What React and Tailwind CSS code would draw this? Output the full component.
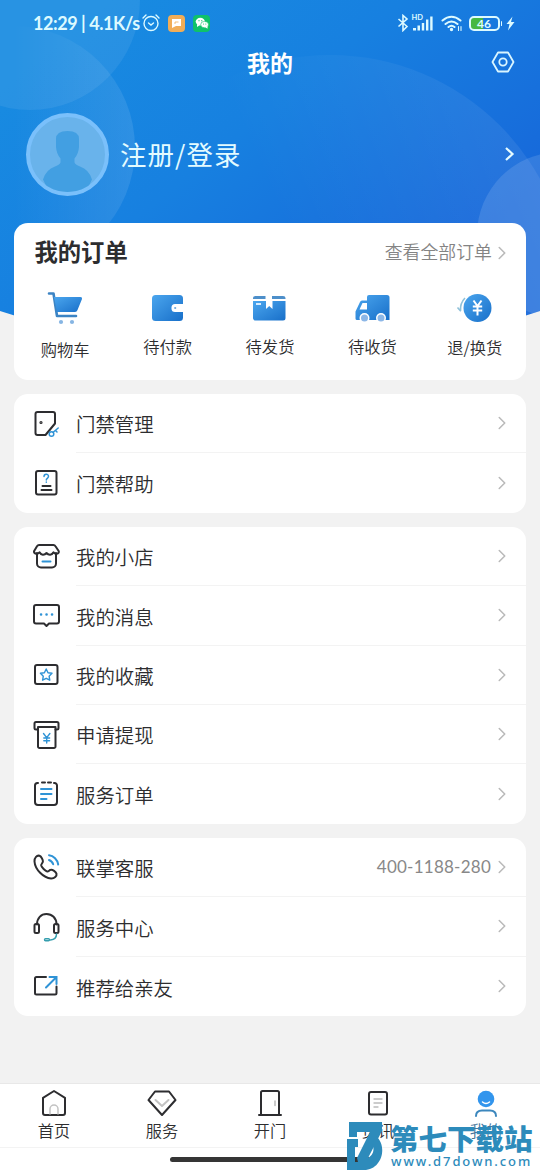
import { ChevronRight } from "lucide-react";

const INK = "#2d2d30";
const BLUE = "#2f93d6";

function Icon({ children, w = 30, h = 30, className = "" }) {
  return (
    <svg
      width={w}
      height={h}
      viewBox={`0 0 ${w} ${h}`}
      fill="none"
      stroke={INK}
      strokeWidth="2"
      strokeLinecap="round"
      strokeLinejoin="round"
      className={`shrink-0 ${className}`}
    >
      {children}
    </svg>
  );
}

const icons = {
  door: (
    <Icon>
      <path d="M14.500 26H6.500a2 2 0 0 1-2-2V5a2 2 0 0 1 2-2H22a2 2 0 0 1 2 2v9.500L14.500 26" />
      <circle cx="10" cy="13.500" r=".6" />
      <g stroke={BLUE} strokeWidth="1.500">
        <circle cx="20.500" cy="25" r="2.300" />
        <path d="M22.200 23.300l5-4.300M24.500 21.500l1.500 1.500" />
      </g>
    </Icon>
  ),
  help: (
    <Icon>
      <rect x="5" y="3" width="20.500" height="23.500" rx="2" />
      <path d="M11.500 18h8M10.500 22h10" />
      <path d="M13 8.500c0-3 4.500-3 4.500-.2 0 2-2.200 2-2.200 3.700M15.300 14v.2" stroke={BLUE} strokeWidth="1.500" />
    </Icon>
  ),
  shop: (
    <Icon>
      <path d="M6 12v10.500a4 4 0 0 0 4 4h11a4 4 0 0 0 4-4V12" />
      <path d="M8 4h14.500c1 0 1.500.5 2 1.300l3.300 5c.3 2.700-3.700 3.500-5.300 1-1.500 3-5 3-7 .7-2 2.300-5.500 2.300-7-.7-1.700 2.500-5.700 1.700-5.500-1L6 5.300C6.500 4.500 7 4 8 4z" />
      <path d="M11.500 20.500h8" stroke={BLUE} />
    </Icon>
  ),
  message: (
    <Icon>
      <path d="M5 4h21a2 2 0 0 1 2 2v14.500a2 2 0 0 1-2 2h-8L15.500 25 13 22.500H5a2 2 0 0 1-2-2V6a2 2 0 0 1 2-2z" />
      <path d="M10 13.500h.1M15.500 13.500h.1M21 13.500h.1" stroke={BLUE} strokeWidth="2.500" />
    </Icon>
  ),
  favorite: (
    <Icon>
      <rect x="4" y="5" width="22.500" height="19" rx="2" />
      <path d="M15.200 9l1.800 3.700 4 .6-2.900 2.900.7 4-3.600-1.900-3.600 1.900.7-4-2.900-2.900 4-.6z" stroke={BLUE} strokeWidth="1.400" />
    </Icon>
  ),
  withdraw: (
    <Icon>
      <path d="M6.500 9.500H5a1.500 1.500 0 0 1-1.500-1.500V3.500A1.500 1.500 0 0 1 5 2h21a1.500 1.500 0 0 1 1.500 1.500V8A1.500 1.500 0 0 1 26 9.500h-1.500" />
      <path d="M7 7h17.500v19.500a1.500 1.500 0 0 1-1.500 1.500H8.500A1.500 1.500 0 0 1 7 26.500z" />
      <path d="M12.500 13.500l3.200 4.200 3.200-4.200M15.700 18v5M12.800 18h5.800M12.800 20.700h5.800" stroke={BLUE} strokeWidth="1.400" />
    </Icon>
  ),
  order: (
    <Icon>
      <path d="M7 4h-.5A2.500 2.500 0 0 0 4 6.500V23a3 3 0 0 0 3 3h16a3 3 0 0 0 3-3V6.500A2.500 2.500 0 0 0 23.500 4H23M11 3.500h3M17 3.500h3" />
      <path d="M10 10h10.500M10 15h10.500M10 20h5.500" stroke={BLUE} />
    </Icon>
  ),
  phone: (
    <Icon>
      <path d="M8.500 3.800C6 3 3.300 5.500 3.500 9.500 4 17.500 12.500 26 20 26.500c3.500.2 6-2.500 5.500-4.700-.5-2-4-4.300-5.700-4-1.500.2-2.200 2-3.600 1.700-2-.5-5.500-4.200-6-6-.3-1.500 1.500-2.200 1.700-3.800.3-1.500-1.500-5.300-3.400-5.900z" />
      <path d="M18 3.200c4.500.5 8.500 4.500 9.200 9.300M18 8c2 .7 3.600 2.300 4.200 4.300" stroke={BLUE} />
    </Icon>
  ),
  headset: (
    <Icon>
      <path d="M6 12.500C6 6 10 2 15.500 2S25.500 6 25.500 12.500" />
      <rect x="3.500" y="12" width="4.500" height="9" rx="1.500" />
      <rect x="23" y="12" width="4.500" height="9" rx="1.500" />
      <path d="M25.500 22c0 3.500-2.500 5.700-6 6" stroke="#359eae" strokeWidth="1.500" />
      <rect x="13.500" y="26.800" width="5" height="2" rx="1" stroke="#359eae" strokeWidth="1.400" />
    </Icon>
  ),
  share: (
    <Icon>
      <path d="M15 6H5.500A1.500 1.500 0 0 0 4 7.500V22a1.500 1.500 0 0 0 1.500 1.500h18.500A1.500 1.500 0 0 0 25.500 22v-6.500" />
      <path d="M15 16.500L25.500 6M18.500 6h7v7" stroke={BLUE} strokeLinejoin="miter" />
    </Icon>
  ),
};

const groups = [
  [
    { icon: "door", label: "门禁管理" },
    { icon: "help", label: "门禁帮助" },
  ],
  [
    { icon: "shop", label: "我的小店" },
    { icon: "message", label: "我的消息" },
    { icon: "favorite", label: "我的收藏" },
    { icon: "withdraw", label: "申请提现" },
    { icon: "order", label: "服务订单" },
  ],
  [
    { icon: "phone", label: "联掌客服", extra: "400-1188-280" },
    { icon: "headset", label: "服务中心" },
    { icon: "share", label: "推荐给亲友" },
  ],
];

const orderItems = [
  {
    label: "购物车",
    offset: "pt-[4px]",
    art: (
      <>
        <path d="M4 4.500h4.500L12 27h19" fill="none" stroke="#3c84c4" strokeWidth="2.600" strokeLinecap="round" strokeLinejoin="round" />
        <path d="M9 8h26.500q2 0 1.500 2L32.500 21q-.6 2-2.500 2H12z" fill="url(#fill)" />
        <circle cx="16" cy="33" r="2.100" fill="#86b5e3" />
        <circle cx="27" cy="33" r="2.100" fill="#86b5e3" />
      </>
    ),
  },
  {
    label: "待付款",
    offset: "pt-[1px]",
    art: (
      <>
        <rect x="5" y="6" width="31" height="26" rx="3.500" fill="url(#fill)" />
        <path d="M37 15h-9a3.500 3.500 0 0 0-3.500 3.500v1a3.500 3.500 0 0 0 3.500 3.500h9z" fill="#fff" />
        <circle cx="28.200" cy="19" r="1.100" fill="#6ba7dd" />
      </>
    ),
  },
  {
    label: "待发货",
    offset: "pt-[1px]",
    art: (
      <>
        <path d="M6.500 7h10v3H4V9q0-2 2.500-2zM23 7h11q2.500 0 2.500 2v1H23z" fill="#4d8fca" />
        <path d="M4 12h13v8l3.200-3 3.300 3v-8h13v17a2.500 2.500 0 0 1-2.500 2.500h-27A2.500 2.500 0 0 1 4 29z" fill="url(#fill)" />
        <path d="M7 15h5" stroke="#d8ecff" strokeWidth="2" />
      </>
    ),
  },
  {
    label: "待收货",
    offset: "pt-[1px]",
    art: (
      <>
        <path d="M17 6h18a2.500 2.500 0 0 1 2.500 2.500V31H5a1.500 1.500 0 0 1-1.500-1.500v-7L8 13q.5-1.500 2-1.500h5V8a2 2 0 0 1 2-2z" fill="url(#fill)" />
        <path d="M10.500 14H15v6.500H7.500z" fill="#fff" />
        <circle cx="12.500" cy="29" r="5" fill="#fff" />
        <circle cx="29" cy="29" r="5" fill="#fff" />
        <circle cx="12.500" cy="29" r="3.500" fill="#8cb7e7" />
        <circle cx="29" cy="29" r="3.500" fill="#8cb7e7" />
      </>
    ),
  },
  {
    label: "退/换货",
    offset: "pt-[2px]",
    art: (
      <>
        <circle cx="23.500" cy="19" r="14" fill="url(#fill)" />
        <path d="M19.500 11.500l4 5.500 4-5.500M23.500 17v9.500M18.800 17.500h9.400M18.800 21.500h9.400" fill="none" stroke="#fff" strokeWidth="2" />
        <path d="M11 9Q6 14 6.500 22M3.500 18.500l3.300 3.800" fill="none" stroke="#8fc1d9" strokeWidth="1.600" />
      </>
    ),
  },
];

const tabs = [
  {
    label: "首页",
    icon: (
      <Icon>
        <path d="M15 3l11 6.800V25a2 2 0 0 1-2 2H6a2 2 0 0 1-2-2V9.800z" />
        <path d="M11 26v-5a4 4 0 0 1 8 0v5" stroke="#c2c2c2" strokeWidth="1.500" />
      </Icon>
    ),
  },
  {
    label: "服务",
    icon: (
      <Icon>
        <path d="M8 3.500h14l6.500 8.500L15 27 1.500 12z" />
        <path d="M8.500 12l6.500 6 6.500-6" stroke="#c2c2c2" />
      </Icon>
    ),
  },
  {
    label: "开门",
    icon: (
      <Icon>
        <path d="M6 26.500V4.500A1.500 1.500 0 0 1 7.500 3h15A1.500 1.500 0 0 1 24 4.500v22M4 27h22" />
        <path d="M20 13v4.500" stroke="#b8b8b8" strokeWidth="1.500" />
      </Icon>
    ),
  },
  {
    label: "资讯",
    icon: (
      <Icon>
        <rect x="6" y="4" width="18" height="22.500" rx="2" />
        <path d="M11 11h8M11 15h8M11 19h4" stroke="#bcbcbc" strokeWidth="1.400" />
      </Icon>
    ),
  },
  {
    label: "我的",
    active: true,
    icon: (
      <Icon>
        <circle cx="15" cy="11" r="8.300" fill="#3295ed" stroke="none" />
        <path d="M11.500 14q3.500 3 7 0" stroke="#fff" strokeWidth="1.500" />
        <path d="M5 28c0-4 2.500-5.500 6-5.500h8c3.500 0 6 1.500 6 5.500" stroke="#3c87bd" />
      </Icon>
    ),
  },
];

function HeaderBackdrop() {
  return (
    <svg className="absolute left-0 top-0" width="540" height="340" viewBox="0 0 540 340">
      <defs>
        <linearGradient id="sky" gradientUnits="userSpaceOnUse" x1="110" y1="0" x2="370" y2="320">
          <stop offset="0" stopColor="#188be1" />
          <stop offset=".45" stopColor="#1780e0" />
          <stop offset="1" stopColor="#1768da" />
        </linearGradient>
        <linearGradient id="fill" x1="0" y1="0" x2="1" y2="1">
          <stop offset="0" stopColor="#4ba6ee" />
          <stop offset="1" stopColor="#186fc9" />
        </linearGradient>
        <linearGradient id="glow" gradientUnits="userSpaceOnUse" x1="270" y1="200" x2="500" y2="100">
          <stop offset="0" stopColor="#fff" stopOpacity="0" />
          <stop offset="1" stopColor="#fff" stopOpacity=".07" />
        </linearGradient>
        <linearGradient id="glowLeft" x1="0" y1="0" x2="1" y2="0">
          <stop offset="0" stopColor="#fff" stopOpacity="0" />
          <stop offset=".5" stopColor="#fff" stopOpacity="0" />
          <stop offset="1" stopColor="#fff" stopOpacity=".1" />
        </linearGradient>
        <clipPath id="curve">
          <path d="M0 0H540V311Q270 400 0 311z" />
        </clipPath>
      </defs>
      <g clipPath="url(#curve)">
        <rect width="540" height="340" fill="url(#sky)" />
        <circle cx="30" cy="0" r="110" fill="#fff" fillOpacity=".07" />
        <circle cx="13" cy="148" r="122" fill="url(#glowLeft)" />
        <circle cx="330" cy="295" r="240" fill="url(#glow)" />
        <circle cx="560" cy="235" r="83" fill="#fff" fillOpacity=".12" />
      </g>
    </svg>
  );
}

function StatusBar() {
  return (
    <div className="flex h-[46px] items-center pl-[33px] pr-[25px] text-[#ddfaff]">
      <span className="w-[106px] whitespace-nowrap font-[Lato] text-[18px] font-bold leading-none tracking-[-0.450px]">
        12:29 | 4.1K/s
      </span>
      <svg className="ml-[3px]" width="18" height="18" viewBox="0 0 18 18" fill="none" stroke="currentColor" strokeWidth="1.400" strokeLinecap="round">
        <circle cx="9" cy="9.500" r="7" />
        <path d="M1 4l3-3M17 4l-3-3M6.500 9L9 11l2.500-2" />
      </svg>
      <span className="ml-2 flex size-[17px] items-center justify-center rounded bg-[#f1ad57]">
        <svg width="11" height="11" viewBox="0 0 11 11" fill="#fff">
          <path d="M1 1h9v7H5L1 10z" />
          <path d="M4 6V4h3.500" fill="none" stroke="#f1ad57" strokeWidth=".8" />
        </svg>
      </span>
      <span className="ml-2 flex size-[17px] items-center justify-center rounded bg-[#0fc269]">
        <svg width="14" height="12" viewBox="0 0 14 12" fill="#fff">
          <ellipse cx="5.300" cy="4.600" rx="4.600" ry="3.800" />
          <path d="M2 7v3l3-2z" />
          <ellipse cx="9.600" cy="7.600" rx="3.900" ry="3.200" stroke="#0fc269" strokeWidth=".6" />
          <path d="M10 10l2.500 1.700V9z" />
          <g fill="#0fc269">
            <circle cx="4" cy="3.700" r=".6" />
            <circle cx="6.800" cy="3.700" r=".6" />
            <circle cx="8.500" cy="7" r=".5" />
            <circle cx="10.800" cy="7" r=".5" />
          </g>
        </svg>
      </span>

      <div className="ml-auto flex items-center">
        <svg className="mr-[3px]" width="12" height="18" viewBox="0 0 12 18" fill="none" stroke="currentColor" strokeWidth="1.600">
          <path d="M1.500 5l8.500 7.500L6 16.500v-15L10 5 1.500 12.500" />
        </svg>
        <div className="relative h-[18px] w-[22px]">
          <span className="absolute left-0 top-0 font-[Lato] text-[7.500px] font-bold leading-none">HD</span>
          <svg width="22" height="18" viewBox="0 0 22 18" fill="currentColor">
            <path d="M1 14h3v2.500H1zM5.500 11.500h2.500v5H5.500zM9.800 9h2.400v7.500H9.800zM14 5.500h2.400v11H14zM18.200 2.500h2.400v14h-2.400z" />
          </svg>
        </div>
        <svg className="ml-[7px]" width="22" height="18" viewBox="0 0 22 18" fill="none" stroke="currentColor" strokeWidth="2" strokeLinecap="round">
          <path d="M1.500 6.500q9-7.500 18 0M4.500 10q6-5 12 0M7.500 13q3-2.500 6 0" />
          <circle cx="10.500" cy="15.500" r=".7" fill="currentColor" />
          <path d="M17.500 16.500v-4M20 12.500v4" strokeWidth="1.100" />
        </svg>
        <div className="ml-[6px] flex h-[15px] w-[31px] items-center justify-center rounded-[5px] border-2 border-current bg-[linear-gradient(90deg,#47b843_0_44%,transparent_44%)] pt-px font-[Lato] text-[12px] font-bold leading-none">
          46
        </div>
        <span className="ml-px h-[5px] w-[1.500px] rounded bg-current" />
        <svg className="ml-[4px]" width="9" height="15" viewBox="0 0 9 15" fill="currentColor">
          <path d="M6.500.5L.5 8h3L2 14.500 8.500 6H5z" />
        </svg>
      </div>
    </div>
  );
}

function Header() {
  return (
    <header className="relative h-[223px] text-white">
      <StatusBar />
      <div className="relative flex h-9 items-center justify-center">
        <h1 className="pb-[3px] text-[23px] font-bold leading-none">我的</h1>
        <svg className="absolute right-[25px] top-[5px]" width="24" height="22" viewBox="0 0 24 22" fill="none" stroke="#d9f5ff" strokeWidth="1.800" strokeLinejoin="round">
          <path d="M7 1.500h10L22.500 11 17 20.500H7L1.500 11z" />
          <circle cx="12" cy="11" r="3.700" />
        </svg>
      </div>
      <div className="mt-[30px] flex h-[84px] items-center pl-[26px] pr-[22px]">
        <svg width="83" height="83" viewBox="0 0 83 83">
          <defs>
            <clipPath id="face">
              <circle cx="41.500" cy="41.500" r="37.500" />
            </clipPath>
          </defs>
          <circle cx="41.500" cy="41.500" r="39.500" fill="#69b3eb" stroke="#7ac0fb" strokeWidth="4" />
          <path
            clipPath="url(#face)"
            fill="#429fe2"
            d="M30 26q0-8 11.500-8T53 26v8q-.5 7-4.500 11.500v4q.5 2 5.500 4 9 3 12 13L58 83H25L17 66.500q3-10 12-13 5-2 5.500-4v-4Q30.500 41 30 34z"
          />
        </svg>
        <span className="ml-[11px] text-[26.400px] leading-none tracking-[1.100px] text-[#e3fbff]">注册/登录</span>
        <svg className="ml-auto" width="16" height="18" viewBox="0 0 16 18" fill="none" stroke="#e6fcff" strokeWidth="2.200">
          <path d="M4 3l6.500 6L4 15" />
        </svg>
      </div>
    </header>
  );
}

function Arrow() {
  return <ChevronRight className="-mr-[7px] h-[22px] w-[22px] shrink-0 text-[#bababa]" strokeWidth={1.7} />;
}

function OrderCard() {
  return (
    <section className="h-[157px] rounded-[14px] bg-white">
      <div className="flex h-[59px] items-center pl-[20.500px] pr-5">
        <h2 className="pb-px text-[23.300px] font-bold leading-none">我的订单</h2>
        <span className="-mr-px ml-auto pb-[2px] text-[17.900px] font-[350] leading-none text-[#848484]">
          查看全部订单
        </span>
        <Arrow />
      </div>
      <div className="grid grid-cols-5">
        {orderItems.map((item) => (
          <div key={item.label} className="flex flex-col items-center pt-[7px]">
            <svg width="41" height="38" viewBox="0 0 41 38">{item.art}</svg>
            <div className={item.offset}>
              <div className="mt-[10px] text-[16.300px] font-[350] leading-none">{item.label}</div>
            </div>
          </div>
        ))}
      </div>
    </section>
  );
}

function MenuGroup({ rows }) {
  return (
    <section className="rounded-[14px] bg-white">
      {rows.map((row, i) => (
        <div key={row.label} className="flex h-[59.400px] items-center pl-[17px]">
          {icons[row.icon]}
          <div
            className={`ml-[15px] flex h-full flex-1 items-center pr-5 ${
              i < rows.length - 1 ? "border-b border-[#f3f3f3]" : ""
            }`}
          >
            <span className="pt-[2px] text-[19.400px] font-[350] leading-none">{row.label}</span>
            <span className="ml-auto font-[Lato] text-[17px] leading-none tracking-[0.250px] text-[#888]">
              {row.extra}
            </span>
            <Arrow />
          </div>
        </div>
      ))}
    </section>
  );
}

function TabBar() {
  return (
    <nav className="mt-auto h-[87px] border-t border-[#e8e8e8] bg-white">
      <div className="grid h-16 grid-cols-5 border-b border-[#f3f3f3]">
        {tabs.map((tab) => (
          <div key={tab.label} className="flex flex-col items-center pt-1">
            {tab.icon}
            <span
              className={`mt-1 text-[16.200px] font-[350] leading-none ${tab.active ? "text-[#46759a]" : ""}`}
            >
              {tab.label}
            </span>
          </div>
        ))}
      </div>
      <div className="mx-auto mt-[9px] h-[5px] w-[200px] rounded-full bg-[#353535]" />
    </nav>
  );
}

function Watermark() {
  return (
    <div className="absolute bottom-0 left-[346px] flex h-[48px] w-[194px] text-[#2d8bbb]">
      <svg width="40" height="48" viewBox="0 0 40 48" fill="currentColor">
        <path d="M3 0h33v9L22 36H11L24 10H11v5H3z" />
        <path d="M1 17h11v8H9v15h3l-1-4h11c7-4 6-11 4-15l4-7c12 10 6 34-12 34H1z" />
      </svg>
      <div className="ml-1 flex flex-col whitespace-nowrap">
        <span className="mt-[2px] text-[28.500px] font-black leading-[28px]">第七下载站</span>
        <span className="pl-px font-['Noto_Sans'] text-[13px] font-medium leading-[18px] tracking-[1.900px]">
          www.d7down.com
        </span>
      </div>
    </div>
  );
}

export default function App() {
  return (
    <div className="relative flex h-[1170px] w-[540px] flex-col overflow-hidden bg-[#f2f2f2] font-['Noto_Sans_CJK_SC',sans-serif] text-[#2d2d2f]">
      <HeaderBackdrop />
      <Header />
      <main className="relative flex flex-col gap-[14px] px-[14px]">
        <OrderCard />
        {groups.map((rows) => (
          <MenuGroup key={rows[0].label} rows={rows} />
        ))}
      </main>
      <TabBar />
      <Watermark />
    </div>
  );
}
